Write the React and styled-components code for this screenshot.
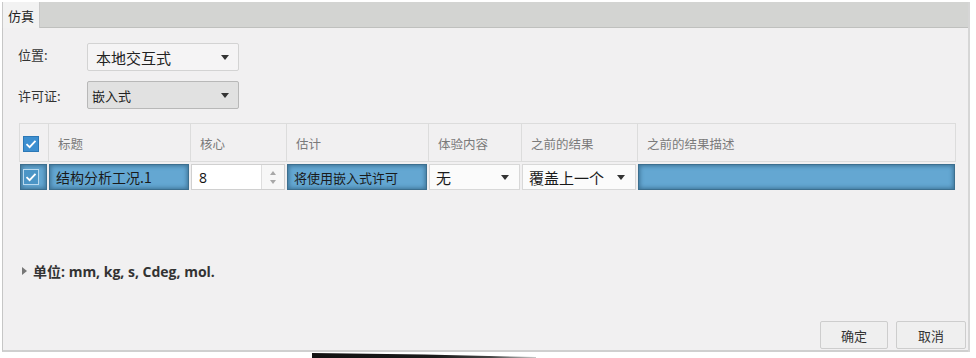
import React from "react";
import styled, { createGlobalStyle } from "styled-components";

const GlobalStyle = createGlobalStyle`
  html, body {
    margin: 0;
    padding: 0;
    background: #ffffff;
    font-family: "Open Sans", "Noto Sans CJK SC", sans-serif;
    font-size: 13px;
  }
`;

const Frame = styled.div`
  position: relative;
  width: 976px;
  height: 358px;
  padding: 2px 0 0 2px;
  box-sizing: border-box;
  overflow: hidden;
`;

const Window = styled.div`
  width: 968px;
  height: 350px;
  display: flex;
  flex-direction: column;
  border-right: 2px solid #d6d6d6;
  box-sizing: border-box;
`;

const TabBar = styled.div`
  height: 25px;
  display: flex;
  background: #d3d4d2;
  border-bottom: 1px solid #bfc0be;
`;

const Tab = styled.div`
  width: 38px;
  height: 26px;
  background: #f2f2f2;
  border-right: 1px solid #c9c9c9;
  border-left: 1px solid #c9c9c9;
  display: flex;
  align-items: center;
  justify-content: center;
  font-family: "Noto Sans CJK SC", sans-serif;
  font-size: 13px;
  color: #222;
  box-sizing: border-box;
`;

const Body = styled.div`
  flex: 1;
  background: #f1f0f1;
  border-left: 1px solid #c6c6c6;
  border-bottom: 2px solid #cfcfcf;
  display: flex;
  flex-direction: column;
  padding: 15px 0 0 15px;
  box-sizing: border-box;
`;

const FieldRow = styled.div`
  display: flex;
  align-items: center;
  height: 28px;
  margin-bottom: ${(p) => p.gap || 0}px;
`;

const Label = styled.div`
  width: 69px;
  font-family: "Noto Sans CJK SC", sans-serif;
  font-size: 13px;
  color: #333;
  padding-bottom: ${(p) => p.lift || 0}px;
`;

const Select = styled.div`
  width: 152px;
  height: 28px;
  box-sizing: border-box;
  border: 1px solid ${(p) => (p.dark ? "#b8b8b8" : "#d3d3d3")};
  border-radius: 2px;
  background: ${(p) => (p.dark ? "#e1e1e1" : "#f5f4f5")};
  display: flex;
  align-items: center;
  justify-content: space-between;
  padding: 0 9px 0 ${(p) => (p.dark ? 4 : 8)}px;
  font-family: "Noto Sans CJK SC", sans-serif;
  font-size: ${(p) => (p.dark ? 13 : 15)}px;
  color: #222;
`;

const Arrow = styled.span`
  width: 0;
  height: 0;
  border-left: 4px solid transparent;
  border-right: 4px solid transparent;
  border-top: 5px solid #333;
`;

const Table = styled.div`
  margin-top: 14px;
  width: 937px;
  display: grid;
  grid-template-columns: 29px 142px 96px 142px 93px 116px 1fr;
  grid-template-rows: 38px 30px;
  border-top: 1px solid #dcdcdc;
  margin-left: 1px;
`;

const HeadCell = styled.div`
  display: flex;
  align-items: center;
  padding-left: ${(p) => (p.check ? 3 : 9)}px;
  border-left: 1px solid #dcdcdc;
  border-right: ${(p) => (p.last ? "1px solid #dcdcdc" : "none")};
  border-bottom: 1px solid #dcdcdc;
  font-family: "Noto Sans CJK SC", sans-serif;
  font-size: 12.5px;
  color: #7a7a7a;
  padding-top: 2px;
  box-sizing: border-box;
`;

const Cell = styled.div`
  display: flex;
  align-items: center;
  margin: 2px 1px 2px 1px;
  padding-left: ${(p) => p.pad ?? 7}px;
  box-sizing: border-box;
  font-family: "Noto Sans CJK SC", sans-serif;
  font-size: ${(p) => p.size || 13}px;
  color: #1a1a1a;
  background: ${(p) => (p.blue ? "#64a7d2" : "#fbfbfb")};
  box-shadow: ${(p) =>
    p.blue
      ? "inset 0 0 0 1px #3c6f8f, inset 0 0 4px 2px #3d7396"
      : "inset 0 0 0 1px #d8d8d8"};
  justify-content: ${(p) => (p.spread ? "space-between" : "flex-start")};
  padding-right: ${(p) => (p.spread ? 11 : 0)}px;
`;

const CheckBox = styled.div`
  width: 16px;
  height: 16px;
  background: ${(p) => (p.inRow ? "#4b95c6" : "#3d8fd0")};
  border: 1px solid ${(p) => (p.inRow ? "#b9d9ee" : "#2c78b6")};
  box-sizing: border-box;
  display: flex;
  align-items: center;
  justify-content: center;
`;

const SpinInput = styled.div`
  margin: 2px 1px;
  display: flex;
  background: #ffffff;
  border: 1px solid #d0d0d0;
  box-sizing: border-box;
`;

const SpinText = styled.div`
  flex: 1;
  display: flex;
  align-items: center;
  padding-left: 7px;
  font-family: "Open Sans", sans-serif;
  font-size: 14px;
  color: #111;
`;

const Spinner = styled.div`
  width: 22px;
  border-left: 1px solid #dedede;
  display: flex;
  flex-direction: column;
  align-items: center;
  justify-content: center;
  gap: 5px;
  background: #f7f7f7;
`;

const SpinArrow = styled.span`
  width: 0;
  height: 0;
  border-left: 3px solid transparent;
  border-right: 3px solid transparent;
  ${(p) => (p.up ? "border-bottom" : "border-top")}: 4px solid #a8a8a8;
`;

const Units = styled.div`
  margin-top: 69px;
  margin-left: 4px;
  display: flex;
  align-items: center;
  gap: 6px;
  font-family: "Open Sans", "Noto Sans CJK SC", sans-serif;
  font-weight: 700;
  font-size: 14px;
  color: #333;
`;

const Caret = styled.span`
  width: 0;
  height: 0;
  border-top: 4px solid transparent;
  border-bottom: 4px solid transparent;
  border-left: 5px solid #777;
`;

const Footer = styled.div`
  margin-top: auto;
  display: flex;
  justify-content: flex-end;
  gap: 8px;
  padding: 0 2px 1px 0;
`;

const Button = styled.button`
  width: ${(p) => p.w}px;
  height: 28px;
  background: #efefef;
  border: 1px solid #cdcdcd;
  border-radius: 2px;
  font-family: "Noto Sans CJK SC", sans-serif;
  font-size: 13px;
  color: #333;
  padding: 0;
`;

const Smudge = styled.div`
  position: absolute;
  left: 312px;
  bottom: 0;
  width: 224px;
  height: 6px;
  background: linear-gradient(to right, #111 0%, #1a1a1a 55%, #444 80%, rgba(120,120,120,0.4) 100%);
  clip-path: polygon(0 15%, 50% 40%, 100% 85%, 100% 100%, 0 100%);
`;

const Check = () => (
  <svg width="12" height="10" viewBox="0 0 12 10">
    <path d="M1.5 5.2 L4.6 8.2 L10.5 1.8" fill="none" stroke="#fff" strokeWidth="1.8" />
  </svg>
);

export default function App() {
  return (
    <>
      <GlobalStyle />
      <Frame>
        <Window>
          <TabBar>
            <Tab>仿真</Tab>
          </TabBar>
          <Body>
            <FieldRow gap={10}>
              <Label lift={6}>位置:</Label>
              <Select>
                本地交互式
                <Arrow />
              </Select>
            </FieldRow>
            <FieldRow>
              <Label>许可证:</Label>
              <Select dark>
                嵌入式
                <Arrow />
              </Select>
            </FieldRow>
            <Table>
              <HeadCell check>
                <CheckBox>
                  <Check />
                </CheckBox>
              </HeadCell>
              <HeadCell>标题</HeadCell>
              <HeadCell>核心</HeadCell>
              <HeadCell>估计</HeadCell>
              <HeadCell>体验内容</HeadCell>
              <HeadCell>之前的结果</HeadCell>
              <HeadCell last>之前的结果描述</HeadCell>

              <Cell blue pad={3}>
                <CheckBox inRow>
                  <Check />
                </CheckBox>
              </Cell>
              <Cell blue size={14}>结构分析工况.1</Cell>
              <SpinInput>
                <SpinText>8</SpinText>
                <Spinner>
                  <SpinArrow up />
                  <SpinArrow />
                </Spinner>
              </SpinInput>
              <Cell blue>将使用嵌入式许可</Cell>
              <Cell spread size={15}>
                无
                <Arrow />
              </Cell>
              <Cell spread size={15}>
                覆盖上一个
                <Arrow />
              </Cell>
              <Cell blue />
            </Table>
            <Units>
              <Caret />
              单位: mm, kg, s, Cdeg, mol.
            </Units>
            <Footer>
              <Button w={68}>确定</Button>
              <Button w={70}>取消</Button>
            </Footer>
          </Body>
        </Window>
        <Smudge />
      </Frame>
    </>
  );
}
